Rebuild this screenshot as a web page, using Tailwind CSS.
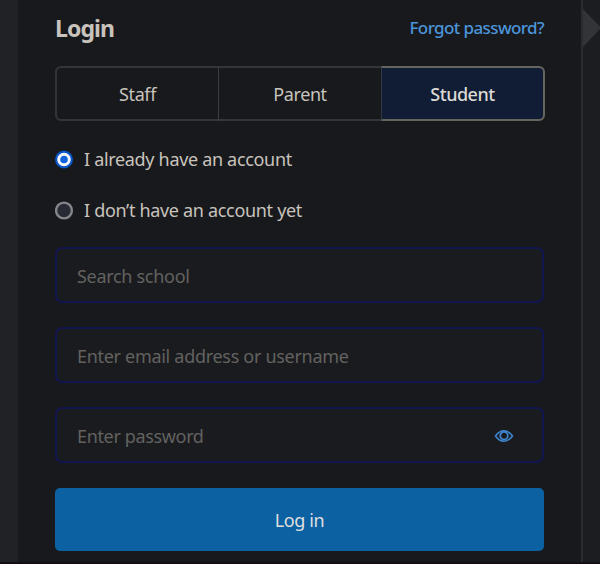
<!DOCTYPE html>
<html lang="en">
<head>
<meta charset="utf-8">
<title>Login</title>
<script src="https://cdn.jsdelivr.net/npm/@tailwindcss/browser@4"></script>
</head>
<body class="h-[564px] w-[600px] overflow-hidden bg-[#18191c] font-['Noto_Sans','Open_Sans',sans-serif] text-[18px] leading-6 text-[#c8c3bc]">
<div class="flex h-[562px]">
  <div class="w-[18px] shrink-0 bg-[#212225]"></div>
  <main class="w-[563px] shrink-0 pl-[37px] pr-[37px]">
    <header class="flex h-[66px] items-start justify-between">
      <h1 class="pt-[12px] text-[23px] font-bold leading-8 tracking-[-0.9px]">Login</h1>
      <a class="pt-[16px] text-[17px] font-medium tracking-[-0.6px] text-[#4b94da]">Forgot password?</a>
    </header>
    <div class="flex h-[55px] w-[490px]">
      <button class="w-[163px] rounded-l-[6px] border-2 border-r-0 border-[#333538] tracking-[-0.4px]">Staff</button>
      <button class="w-[163px] border-y-2 border-l border-[#333538] border-l-[#3b3d40] tracking-[-0.4px]">Parent</button>
      <button class="w-[164px] rounded-r-[6px] border-2 border-l border-[#66645f] border-l-[#343a43] bg-[#101d34] font-medium tracking-[-0.5px] text-[#dddad6]">Student</button>
    </div>
    <div class="mt-[26px] flex h-6 items-center gap-[10px]">
      <svg class="size-[19px]" viewBox="0 0 19 19"><circle cx="9" cy="9.500" r="9" fill="#0756ca"/><circle cx="9" cy="9.500" r="5.300" fill="#1264da" stroke="#f3f6fc" stroke-width="3"/></svg>
      <span class="tracking-[-0.32px]">I already have an account</span>
    </div>
    <div class="mt-[27px] flex h-6 items-center gap-[10px]">
      <svg class="size-[19px]" viewBox="0 0 19 19"><circle cx="9" cy="9.500" r="7.900" fill="#292b34" stroke="#85868a" stroke-width="2.400"/></svg>
      <span class="tracking-[-0.32px]">I don’t have an account yet</span>
    </div>
    <div class="mt-[25px] flex h-[56px] w-[489px] items-center rounded-[7px] border-2 border-[#11164e] bg-[#1a1b1e] pl-[20px] pt-px text-[#626260] tracking-[-0.3px]">Search school</div>
    <div class="mt-[24px] flex h-[56px] w-[489px] items-center rounded-[7px] border-2 border-[#11164e] bg-[#1a1b1e] pl-[20px] pt-px text-[#626260] tracking-[-0.3px]">Enter email address or username</div>
    <div class="mt-[24px] flex h-[56px] w-[489px] items-center justify-between rounded-[7px] border-2 border-[#11164e] bg-[#1a1b1e] pl-[20px] pr-[28px] pt-px text-[#626260] tracking-[-0.35px]">
      <span>Enter password</span>
      <svg class="h-[14px] w-5" viewBox="0 0 20 14" fill="none" stroke="#3e85cd"><path d="M1.500 7C4 3.500 6.500 1.800 10 1.800S16 3.500 18.500 7C16 10.500 13.500 12.200 10 12.200S4 10.500 1.500 7Z" stroke-width="1.600"/><circle cx="10" cy="6.700" r="3.800" stroke-width="1.800"/></svg>
    </div>
    <button class="mt-[25px] block h-[63px] w-[489px] rounded-[5px] bg-[#0c61a2] tracking-[-0.4px] text-[#dedfdf]">Log in</button>
  </main>
  <div class="grow border-l-2 border-[#2b2c2f] bg-[#1c1d20] pt-[9px]">
    <svg class="h-[38px] w-[17px]" viewBox="0 0 17 38"><path d="M0 0L17 17.500V20L0 38Z" fill="#333437"/></svg>
  </div>
</div>
<div class="h-[2px] bg-[#140d18]"></div>
</body>
</html>
